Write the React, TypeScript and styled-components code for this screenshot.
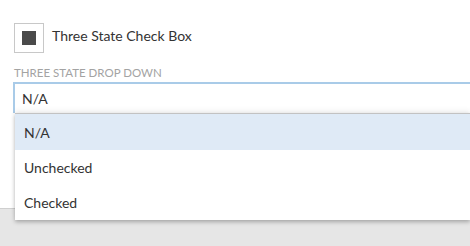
import styled, { createGlobalStyle } from 'styled-components';

const GlobalStyle = createGlobalStyle`
	html, body {
		margin: 0;
		padding: 0;
		font-family: "Lato", "Open Sans", sans-serif;
		color: #333333;
	}
`;

const Page = styled.div`
	min-height: 100vh;
	background-color: #e6e6e6;
`;

const Panel = styled.div`
	box-sizing: border-box;
	height: 209px;
	padding: 23px 0 0 14px;
	background-color: #ffffff;
	border-bottom: 1px solid #cfcfcf;
`;

const CheckRow = styled.div`
	display: flex;
	align-items: center;
	gap: 8px;
`;

const CheckBox = styled.div`
	box-sizing: border-box;
	display: flex;
	justify-content: center;
	align-items: center;
	width: 30px;
	height: 30px;
	border: 1px solid #c8c8c8;
	background-color: #ffffff;
`;

const Mark = styled.div`
	width: 14px;
	height: 14px;
	background-color: #4a4a4a;
`;

const CheckText = styled.span`
	margin-bottom: 5px;
	font-size: 14px;
	color: #333333;
`;

const FieldLabel = styled.div`
	margin-top: 12px;
	font-size: 11.5px;
	line-height: 16px;
	text-transform: uppercase;
	color: #a3a3a3;
`;

const Field = styled.div`
	position: relative;
	margin: 1px 0 0 -1px;
`;

const Input = styled.div`
	box-sizing: border-box;
	display: flex;
	align-items: center;
	width: 100%;
	height: 31px;
	padding-left: 7px;
	border-top: 2px solid #a9cbe8;
	border-left: 2px solid #a9cbe8;
	background-color: #ffffff;
	font-size: 14px;
	color: #333333;
`;

const Menu = styled.ul`
	position: absolute;
	top: 100%;
	left: 2px;
	right: 0;
	z-index: 1;
	margin: 0;
	padding: 0;
	list-style: none;
	background-color: #ffffff;
	border-top: 1px solid #c2c2c2;
	box-shadow: 0 2px 4px rgba(0, 0, 0, 0.28), 0 -3px 5px rgba(0, 0, 0, 0.05);
`;

const Option = styled.li<{ $active?: boolean }>`
	display: flex;
	align-items: center;
	height: ${props => (props.$active ? '36px' : '35px')};
	padding-left: 9px;
	font-size: 14px;
	color: #333333;
	background-color: ${props => (props.$active ? '#dfeaf6' : '#ffffff')};
`;

const options = ['N/A', 'Unchecked', 'Checked'];

export default function App() {
	return (
		<Page>
			<GlobalStyle />
			<Panel>
				<CheckRow>
					<CheckBox>
						<Mark />
					</CheckBox>
					<CheckText>Three State Check Box</CheckText>
				</CheckRow>
				<FieldLabel>Three State Drop Down</FieldLabel>
				<Field>
					<Input>N/A</Input>
					<Menu>
						{options.map(option => (
							<Option key={option} $active={option === 'N/A'}>
								{option}
							</Option>
						))}
					</Menu>
				</Field>
			</Panel>
		</Page>
	);
}
